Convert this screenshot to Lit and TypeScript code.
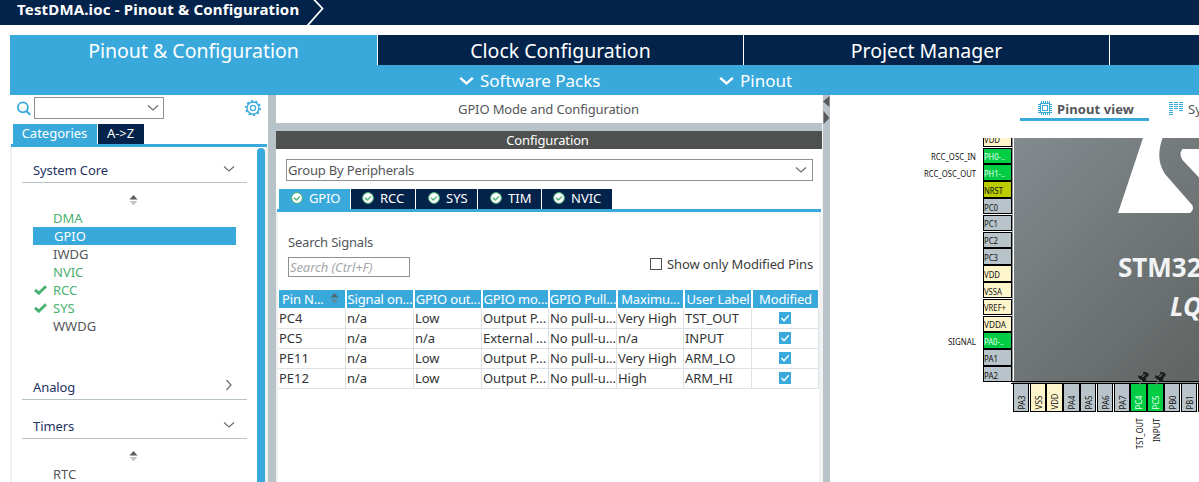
import { LitElement, html, css, svg } from "lit";
import { customElement } from "lit/decorators.js";
import { classMap } from "lit/directives/class-map.js";

const chevronDown = html`<svg class="chev" width="12" height="8" viewBox="0 0 12 8"><path d="M1 1.5 L6 6 L11 1.5" fill="none" stroke="#6b6e70" stroke-width="1.2"/></svg>`;
const chevronRight = html`<svg class="chev" width="8" height="12" viewBox="0 0 8 12"><path d="M1.5 1 L6 6 L1.5 11" fill="none" stroke="#6b6e70" stroke-width="1.2"/></svg>`;
const boldChevron = html`<svg width="15" height="10" viewBox="0 0 15 10"><path d="M1.2 1.8 L7.5 7.4 L13.8 1.8" fill="none" stroke="#fff" stroke-width="2.4"/></svg>`;
const sorter = html`<svg class="sorter" width="9" height="11" viewBox="0 0 9 11"><path d="M4.5 0 L8.500 4.5 H.5 Z" fill="#58595b"/><path d="M4.5 10.5 L8.500 6 H.5 Z" fill="#c4c6c8"/></svg>`;
const okBadge = html`<svg width="12" height="12" viewBox="0 0 12 12"><circle cx="6" cy="6" r="5.4" fill="#fff" stroke="#49b170" stroke-width="1"/><path d="M3 5.8 L5.4 8 L9 4.4" fill="none" stroke="#49b170" stroke-width="1.3"/></svg>`;
const tick = html`<svg width="13" height="10" viewBox="0 0 13 10"><path d="M1 4.8 L4.8 8.2 L12 1.2" fill="none" stroke="#49b170" stroke-width="2.9"/></svg>`;

@customElement("side-panel")
class SidePanel extends LitElement {
  static styles = css`
    :host { display: block; width: 268px; flex: none; background: #fff; color: #53565a; }
    .search { display: flex; height: 29px; padding: 2px 6px 0 16px; box-sizing: border-box; align-items: flex-start; }
    .search > svg:first-child { margin-top: 4px; }
    .combo { box-sizing: border-box; width: 130px; height: 22px; margin-left: 3px; border: 1px solid #8b9296; display: flex; justify-content: flex-end; align-items: center; padding-right: 4px; }
    .gear { margin: 3px 0 0 81px; }
    .tabs { display: flex; gap: 1px; height: 20px; padding-left: 13px; }
    .tab { box-sizing: border-box; width: 46px; background: #03234b; color: #fff; text-align: center; line-height: 18px; padding-right: 1px; letter-spacing: -0.1px; }
    .tab.on { width: 84px; background: #39a9dc; letter-spacing: 0; }
    .line { height: 3px; margin: 0 1px 0 11px; background: #39a9dc; }
    .body { display: flex; height: 335px; margin-left: 10px; border-left: 2px solid #f0f0f0; }
    .tree { width: 225px; padding-left: 10px; padding-top: 10px; }
    .bar { width: 8px; margin: 1px 0 0 10px; background: #39a9dc; border-radius: 4px 4px 0 0; }
    .edge { width: 3px; background: #f2f2f2; }
    .group { box-sizing: border-box; display: flex; justify-content: space-between; height: 26px; border-bottom: 1px solid #b7c3c9; padding: 4px 12px 0 11px; line-height: 18px; color: #243363; letter-spacing: -0.1px; }
    .group .chev { margin-top: 4px; }
    .group .chev[height="12"] { margin: 1px 2px 0 0; }
    .sorter { display: block; margin: 12px 0 3px 107px; }
    .item { display: flex; box-sizing: border-box; width: 203px; height: 18px; margin-left: 11px; line-height: 18px; }
    .mark { width: 20px; padding: 4px 0 0 1px; box-sizing: border-box; line-height: 0; }
    .green { color: #49b170; }
    .sel { background: #39a9dc; color: #fff; padding-left: 1px; }
    .analog { margin-top: 39px; }
    .timers { margin-top: 13px; }
  `;
  items = [["DMA", "green"], ["GPIO", "sel"], ["IWDG", ""], ["NVIC", "green"], ["RCC", "green", "y"], ["SYS", "green", "y"], ["WWDG", ""]];
  render() {
    return html`
      <div class="search">
        <svg width="15" height="15" viewBox="0 0 15 15"><circle cx="6.9" cy="6.3" r="5" fill="none" stroke="#39a9dc" stroke-width="1.8"/><path d="M10.3 9.9 L14.3 13.8" stroke="#39a9dc" stroke-width="2.1"/></svg>
        <div class="combo">${chevronDown}</div>
        <svg class="gear" width="16" height="16" viewBox="0 0 16 16" fill="none" stroke="#39a9dc">
          <circle cx="8" cy="8" r="7.2" stroke-width="1.600" stroke-dasharray="2.26 2.26"/>
          <circle cx="8" cy="8" r="6" stroke-width="1.3"/>
          <circle cx="8" cy="8" r="2.6" stroke-width="1.3"/>
        </svg>
      </div>
      <div class="tabs"><div class="tab on">Categories</div><div class="tab">A-&gt;Z</div></div>
      <div class="line"></div>
      <div class="body">
        <div class="tree">
          <div class="group"><span>System Core</span>${chevronDown}</div>
          ${sorter}
          ${this.items.map(([n, c, m]) => html`<div class=${classMap({ item: true, green: c === "green", sel: c === "sel" })}><span class="mark">${m ? tick : ""}</span>${n}</div>`)}
          <div class="group analog"><span>Analog</span>${chevronRight}</div>
          <div class="timers">
            <div class="group"><span>Timers</span>${chevronDown}</div>
            ${sorter}
            <div class="item"><span class="mark"></span>RTC</div>
          </div>
        </div>
        <div class="bar"></div><div class="edge"></div>
      </div>`;
  }
}

@customElement("config-panel")
class ConfigPanel extends LitElement {
  static styles = css`
    :host { display: block; width: 546px; flex: none; background: #fff; color: #53565a; }
    .title { height: 28px; line-height: 29px; text-align: center; border-bottom: 8px solid #b7c3c9; letter-spacing: -0.14px; padding-right: 1px; }
    .dark { height: 18px; line-height: 18px; background: #4f5150; color: #fff; text-align: center; letter-spacing: -0.14px; padding-right: 3px; }
    .combo { box-sizing: border-box; width: 527px; height: 22px; margin: 10px 0 8px 10px; border: 1px solid #8b9296; display: flex; justify-content: space-between; align-items: center; padding: 0 5px 0 1px; line-height: 18px; letter-spacing: -0.17px; }
    .tabs { display: flex; gap: 1px; height: 20px; padding-left: 3px; }
    .tab { box-sizing: border-box; display: flex; gap: 6px; background: #03234b; color: #fff; padding: 0 0 0 11px; line-height: 19px; }
    .tab svg { margin-top: 3px; }
    .tab:nth-child(1) { width: 71px; background: #39a9dc; padding-left: 12px; letter-spacing: -0.2px; }
    .tab:nth-child(2) { width: 64px; }
    .tab:nth-child(3) { width: 61px; padding-left: 12px; }
    .tab:nth-child(4) { width: 63px; padding-left: 12px; }
    .tab:nth-child(5) { width: 70px; }
    .line { height: 3px; margin: 0 1px; background: #39a9dc; }
    .content { box-sizing: border-box; height: 270px; border-left: 2px solid #f0f0f0; border-right: 3px solid #f2f2f2; padding-top: 21px; }
    .label { padding-left: 10px; height: 24px; line-height: 19px; letter-spacing: -0.2px; }
    .tools { display: flex; justify-content: space-between; height: 33px; padding: 0 6px 0 10px; }
    .input { box-sizing: border-box; width: 122px; height: 20px; border: 1px solid #8b9296; padding-left: 1px; line-height: 19px; font-style: italic; color: #a5a7a9; letter-spacing: -0.1px; }
    .check { display: flex; gap: 5px; color: #3c3c3b; line-height: 15px; letter-spacing: -0.12px; }
    .box { box-sizing: border-box; width: 12px; height: 12px; border: 1px solid #4f5150; margin-top: 1px; }
    .row { display: grid; grid-template-columns: 68px 68px 68px 67px 68px 67px 68px 67px; color: #323436; }
    .heads { margin-bottom: 1px; }
    .h { height: 18px; margin: 0 1px; background: #39a9dc; color: #fff; line-height: 19px; white-space: nowrap; display: flex; justify-content: center; letter-spacing: -0.16px; }
    .h:first-child { justify-content: flex-start; padding-left: 3px; }
    .h .sorter { margin: 3px 0 0 6px; opacity: .8; }
    .h .sorter path + path { fill: #6a8593; }
    .c { box-sizing: border-box; height: 20px; border-right: 1px solid #dfe2e5; border-bottom: 1px solid #dfe2e5; padding-left: 1px; line-height: 18px; white-space: nowrap; letter-spacing: -0.05px; }
    .c.m { padding: 3px 0 0 27px; line-height: 0; }
  `;
  heads = ["Pin N...", "Signal on...", "GPIO out...", "GPIO mo...", "GPIO Pull...", "Maximu...", "User Label", "Modified"];
  rows = [
    ["PC4", "n/a", "Low", "Output P...", "No pull-u...", "Very High", "TST_OUT"],
    ["PC5", "n/a", "n/a", "External ...", "No pull-u...", "n/a", "INPUT"],
    ["PE11", "n/a", "Low", "Output P...", "No pull-u...", "Very High", "ARM_LO"],
    ["PE12", "n/a", "Low", "Output P...", "No pull-u...", "High", "ARM_HI"],
  ];
  render() {
    return html`
      <div class="title">GPIO Mode and Configuration</div>
      <div class="dark">Configuration</div>
      <div class="combo"><span>Group By Peripherals</span>${chevronDown}</div>
      <div class="tabs">${["GPIO", "RCC", "SYS", "TIM", "NVIC"].map((t) => html`<div class="tab">${okBadge}<span>${t}</span></div>`)}</div>
      <div class="line"></div>
      <div class="content">
        <div class="label">Search Signals</div>
        <div class="tools"><div class="input">Search (Ctrl+F)</div><div class="check"><span class="box"></span><span>Show only Modified Pins</span></div></div>
        <div class="row heads">${this.heads.map((h, i) => html`<div class="h">${h}${i === 0 ? sorter : ""}</div>`)}</div>
        ${this.rows.map((r) => html`<div class="row">${r.map((c) => html`<div class="c">${c}</div>`)}<div class="c m"><svg width="12" height="12"><rect width="12" height="12" fill="#39a9dc"/><path d="M2.5 6 L5 8.8 L9.8 3.2" fill="none" stroke="#fff" stroke-width="1.4"/></svg></div></div>`)}
      </div>`;
  }
}

const FILL: Record<string, string> = { p: "#fff5cb", g: "#00cc44", n: "#bbcc00", x: "#b9c4ca" };
// Pins of the left side: label, kind, top, bottom, signal, signal width
const LEFT: [string, string, number, number, string?, number?][] = [
  ["VDD", "p", 131, 147], ["PH0-..", "g", 148, 164, "RCC_OSC_IN", 45], ["PH1-..", "g", 164, 181, "RCC_OSC_OUT", 52],
  ["NRST", "n", 181, 198], ["PC0", "x", 198, 214], ["PC1", "x", 215, 231], ["PC2", "x", 232, 248], ["PC3", "x", 248, 265],
  ["VDD", "p", 265, 282], ["VSSA", "p", 282, 298], ["VREF+", "p", 299, 315], ["VDDA", "p", 316, 332],
  ["PA0-..", "g", 332, 349, "SIGNAL", 28], ["PA1", "x", 349, 366], ["PA2", "x", 366, 382],
];
// Pins of the bottom side: label, kind, left, right, signal, signal width
const BOTTOM: [string, string, number, number, string?, number?][] = [
  ["PA3", "x", 1013, 1029], ["VSS", "p", 1030, 1046], ["VDD", "p", 1046, 1063], ["PA4", "x", 1063, 1080], ["PA5", "x", 1080, 1096],
  ["PA6", "x", 1097, 1113], ["PA7", "x", 1114, 1130], ["PC4", "g", 1130, 1147, "TST_OUT", 31], ["PC5", "g", 1147, 1164, "INPUT", 24],
  ["PB0", "x", 1164, 1180], ["PB1", "x", 1181, 1197],
];
const LW: Record<string, number> = { VDD: 16, "PH0-..": 21, "PH1-..": 21, NRST: 19, VSSA: 18, "VREF+": 22, VDDA: 22, "PA0-..": 20 };

@customElement("chip-view")
class ChipView extends LitElement {
  static styles = css`
    :host { display: block; flex: 1; min-width: 0; overflow: hidden; background: #fff; color: #53565a; }
    .tabs { display: flex; height: 43px; padding-left: 190px; white-space: nowrap; }
    .tab { box-sizing: border-box; display: flex; flex: none; height: 26px; gap: 5px; padding-top: 4px; line-height: 20px; }
    .tab svg { margin-top: 2px; }
    .on { width: 129px; padding-left: 18px; border-bottom: 3px solid #39a9dc; font-weight: 700; letter-spacing: 0.1px; }
    .sys { padding-left: 20px; }
    .chip { display: block; }
    .pin { font-size: 9px; fill: #111; }
    .inv { fill: #eafff0; }
    .name { font-size: 26px; font-weight: 700; fill: #f1f3f4; }
    .pack { font-style: italic; }
  `;
  render() {
    return html`
      <div class="tabs">
        <div class="tab on"><svg width="14" height="15" viewBox="0 0 14 15" fill="none" stroke="#39a9dc">
          <rect x="2.5" y="2.5" width="9" height="9"/><rect x="4.5" y="4.5" width="5" height="5"/>
          <path d="M3.5 0V2M5.5 0V2M7.5 0V2M9.5 0V2M11.5 0V2M3.5 12V14M5.5 12V14M7.5 12V14M9.5 12V14M11.5 12V14M0 3.5H2M0 5.5H2M0 7.5H2M0 9.5H2M0 11.5H2M12 3.5H14M12 5.5H14M12 7.5H14M12 9.5H14M12 11.5H14"/></svg><span>Pinout view</span></div>
        <div class="tab sys"><svg width="14" height="14" viewBox="0 0 14 14" stroke="#39a9dc">
          <path d="M0 1.500H4M0 3.500H4M0 5.500H4M0 7.500H4M0 9.500H4M0 11.500H4M0 13.500H4M5 1.500H9M5 3.500H9M5 5.500H9M5 7.500H9M10 1.500H14M10 3.500H14M10 5.500H14M10 7.500H14M10 9.500H14"/></svg><span>System view</span></div>
      </div>
      <svg class="chip" width="369" height="344" viewBox="830 138 369 344">
        <defs><linearGradient id="body" gradientUnits="userSpaceOnUse" x1="1014" y1="138" x2="1219" y2="343">
          <stop offset="0" stop-color="#838b8f"/><stop offset="1" stop-color="#616564"/></linearGradient>
        </defs>
        <rect x="1012" y="138" width="187" height="245" fill="#8a9092"/>
        <rect x="1013" y="138" width="1" height="243" fill="#fff"/>
        <rect x="1014" y="138" width="185" height="243" fill="url(#body)"/>
        <path d="M1012 381.5H1199M1011 383.5H1199" stroke="#000"/>
        <path d="M1143 138 L1118 213 H1190 Q1194 210 1192.5 205.5 L1165 174 Q1155 159 1162.500 138 Z" fill="#fff"/>
        <path d="M1199 149 H1182.500 Q1178.500 154 1182.500 160 L1199 177.500 Z" fill="#fff"/>
        ${LEFT.map(([n, k, a, b, s, w], i) => svg`
          <rect x="983.5" y=${a + 0.5} width="28" height=${b - a - 1} fill=${FILL[k]} stroke="#000"/>
          <text class=${k === "g" ? "pin inv" : "pin"} x="984" y=${Math.round(143.3 + 16.8 * i)} textLength=${LW[n] ?? 14} lengthAdjust="spacingAndGlyphs">${n}</text>
          ${s ? svg`<text class="pin" x="976" y=${Math.round(143.3 + 16.8 * i)} text-anchor="end" textLength=${w} lengthAdjust="spacingAndGlyphs">${s}</text>` : ""}`)}
        ${BOTTOM.map(([n, k, a, b, s, w]) => svg`
          <rect x=${a + 0.5} y="383.5" width=${b - a - 1} height="28" fill=${FILL[k]} stroke="#000"/>
          <text class=${k === "g" ? "pin inv" : "pin"} transform="translate(${a + 12} 409.5) rotate(-90)" textLength=${n === "VDD" ? 16 : 14} lengthAdjust="spacingAndGlyphs">${n}</text>
          ${s ? svg`<text class="pin" transform="translate(${a + 13} 418) rotate(-90)" text-anchor="end" textLength=${w} lengthAdjust="spacingAndGlyphs">${s}</text>
            <g transform="translate(${a + 7.5} 371)"><path d="M1.500 14 L5 8" stroke="#777" stroke-width="1.300"/><path d="M0.500 4.500 L4 5 L6 3 L5.500 1 Q7.500 0 11.500 3 L10.500 5.500 L9 6 L8.500 8 L9 11 L6 10.500 L1 7 Z" fill="#1c1d1e"/><path d="M5 6 L7.500 3.500" stroke="#999"/></g>` : ""}`)}
        <path d="M1198.500 383V412" stroke="#000"/>
        <text class="name" x="1118" y="277">STM32F407</text>
        <text class="name pack" x="1170" y="316">LQFP100</text>
      </svg>`;
  }
}

@customElement("app-root")
class AppRoot extends LitElement {
  static styles = css`
    :host { display: block; width: 1199px; height: 482px; overflow: hidden; background: #fff; font: 13px/18px "Noto Sans", sans-serif; }
    .crumb { display: flex; height: 25px; background: #03234b; color: #fff; font-size: 15px; font-weight: 700; line-height: 19px; padding-left: 17px; letter-spacing: 0.16px; }
    .crumb svg { margin-left: 7px; }
    .tabs { display: flex; gap: 1px; height: 30px; margin: 10px 0 0 10px; overflow: hidden; }
    .tab { flex: none; width: 365px; background: #03234b; color: #fff; font-size: 19.5px; line-height: 31px; text-align: center; }
    .tab.on { width: 367px; background: #39a9dc; }
    .menus { display: flex; height: 30px; margin-left: 10px; background: #39a9dc; color: #fff; font-size: 17px; line-height: 31px; }
    .menu { display: flex; gap: 6px; width: 260px; }
    .menu:first-child { margin-left: 449px; }
    .menu svg { margin-top: 11px; }
    .main { display: flex; height: 387px; }
    .split { width: 8px; flex: none; background: #b7c3c9; }
    .split.r { width: 7px; border-left: 1px solid #f4f4f4; }
    .split svg { display: block; }
  `;
  render() {
    return html`
      <div class="crumb"><span>TestDMA.ioc - Pinout &amp; Configuration</span>
        <svg width="20" height="25"><path d="M7.500 -1 L16.500 8.500 L1.500 25.500" fill="none" stroke="#fff" stroke-width="1.800"/></svg></div>
      <div class="tabs"><div class="tab on">Pinout &amp; Configuration</div><div class="tab">Clock Configuration</div><div class="tab">Project Manager</div><div class="tab"></div></div>
      <div class="menus"><div class="menu">${boldChevron}<span>Software Packs</span></div><div class="menu">${boldChevron}<span>Pinout</span></div></div>
      <div class="main">
        <side-panel></side-panel><div class="split"></div>
        <config-panel></config-panel>
        <div class="split r"><svg width="7" height="32"><path d="M6.500 1 V12 L0 6.500 Z M0.500 16 V29 L6.500 23 Z" fill="#58595b"/></svg></div>
        <chip-view></chip-view>
      </div>`;
  }
}
